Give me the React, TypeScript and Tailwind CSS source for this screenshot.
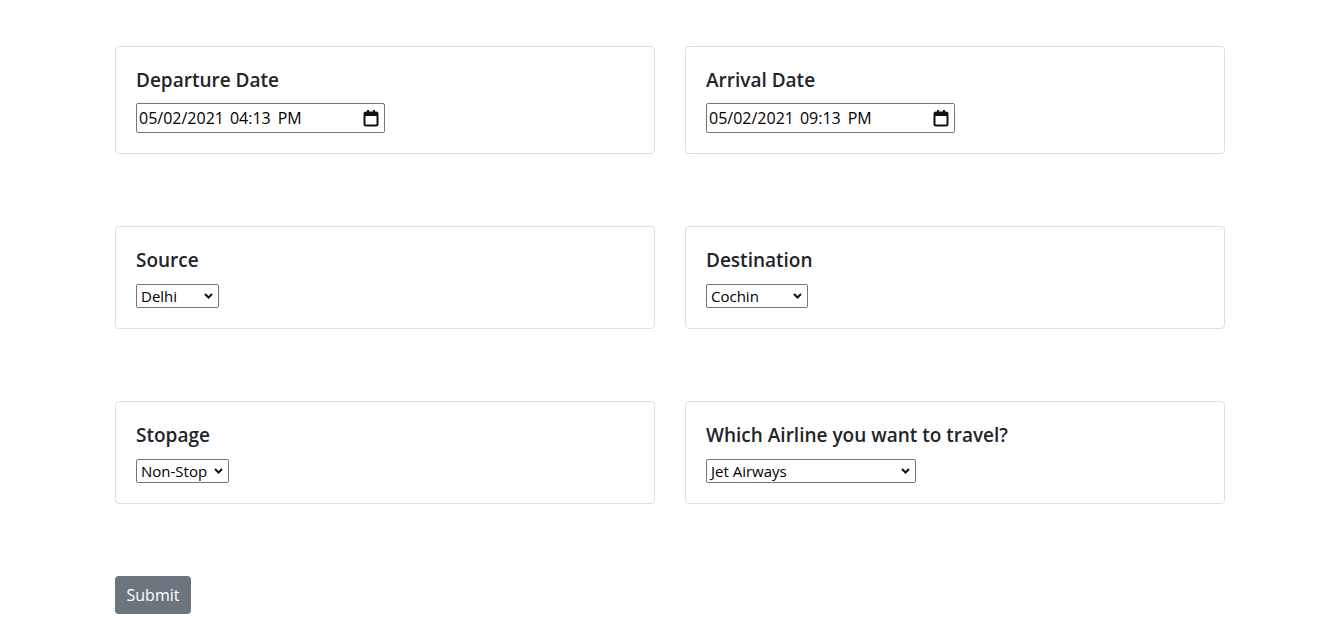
import React from "react";

const font = { fontFamily: '"Open Sans", "Noto Sans", sans-serif' };

function Chevron() {
  return (
    <svg width="9" height="6" viewBox="0 0 9 6" className="mr-[1px] shrink-0">
      <path d="M1 1 L4.5 4.5 L8 1" fill="none" stroke="#111" strokeWidth="2" />
    </svg>
  );
}

function Calendar() {
  return (
    <svg width="16" height="18" viewBox="0 0 16 18" className="shrink-0">
      <rect x="1.5" y="3.5" width="13" height="13" rx="1.5" fill="none" stroke="#111" strokeWidth="2" />
      <rect x="1.5" y="3.5" width="13" height="3.5" fill="#111" />
      <rect x="4" y="1" width="2" height="3" fill="#111" />
      <rect x="10" y="1" width="2" height="3" fill="#111" />
    </svg>
  );
}

function DateBox({ date, time }: { date: string; time: string }) {
  return (
    <div className="flex h-[30px] w-[249px] items-center justify-between rounded-[2px] border border-[#767676] bg-white pl-[2px] pr-[5px] text-[16px] text-black">
      <span className="flex">
        <span>{date}</span>
        <span className="ml-[6px]">{time}</span>
        <span className="ml-[7px]">PM</span>
      </span>
      <Calendar />
    </div>
  );
}

function SelectBox({ value, w }: { value: string; w: string }) {
  return (
    <div className={`flex h-[24px] items-center justify-between rounded-[2px] border border-[#767676] bg-white pl-[4px] pr-[4px] text-[15px] text-black ${w}`}>
      <span className="leading-none">{value}</span>
      <Chevron />
    </div>
  );
}

function Card({ title, children, h, gap }: { title: string; children: React.ReactNode; h: string; gap: string }) {
  return (
    <div className={`w-[540px] rounded-[4px] border border-[#dfdfdf] bg-white px-[20px] ${h}`}>
      <div className="pt-[21px] text-[19px] font-semibold leading-[24px] text-[#212529]">{title}</div>
      <div className={gap}>{children}</div>
    </div>
  );
}

export default function App() {
  return (
    <div className="min-h-[619px] bg-white" style={font}>
      <div className="ml-[115px] flex w-[1110px] flex-col pt-[46px]">
        <div className="flex gap-[30px]">
          <Card title="Departure Date" h="h-[108px]" gap="mt-[11px]">
            <DateBox date="05/02/2021" time="04:13" />
          </Card>
          <Card title="Arrival Date" h="h-[108px]" gap="mt-[11px]">
            <DateBox date="05/02/2021" time="09:13" />
          </Card>
        </div>
        <div className="mt-[72px] flex gap-[30px]">
          <Card title="Source" h="h-[103px]" gap="mt-[12px]">
            <SelectBox value="Delhi" w="w-[83px]" />
          </Card>
          <Card title="Destination" h="h-[103px]" gap="mt-[12px]">
            <SelectBox value="Cochin" w="w-[102px]" />
          </Card>
        </div>
        <div className="mt-[72px] flex gap-[30px]">
          <Card title="Stopage" h="h-[103px]" gap="mt-[12px]">
            <SelectBox value="Non-Stop" w="w-[93px]" />
          </Card>
          <Card title="Which Airline you want to travel?" h="h-[103px]" gap="mt-[12px]">
            <SelectBox value="Jet Airways" w="w-[210px]" />
          </Card>
        </div>
        <div className="mt-[72px]">
          <button className="h-[38px] w-[76px] rounded-[4px] bg-[#6c757d] text-[16px] text-white">
            Submit
          </button>
        </div>
      </div>
    </div>
  );
}
